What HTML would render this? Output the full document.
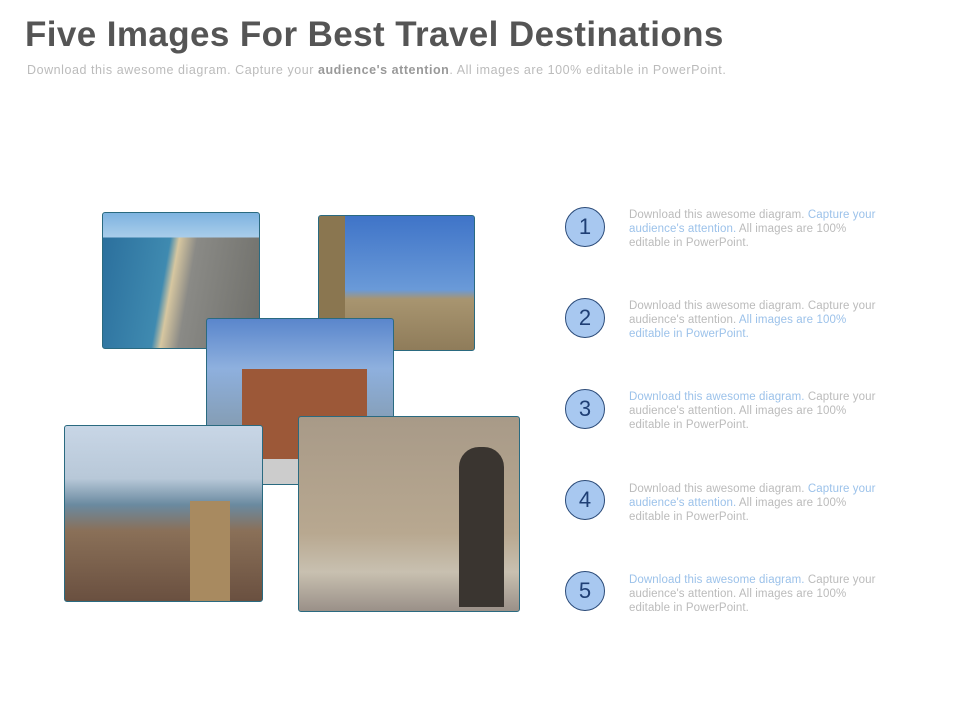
<!DOCTYPE html>
<html><head><style>
body{margin:0;width:960px;height:720px;background:#fff;position:relative;overflow:hidden;font-family:"Liberation Sans",sans-serif}
h1{position:absolute;left:25px;top:15px;margin:0;font-size:35px;font-weight:bold;color:#555;letter-spacing:0.4px}
.sub{position:absolute;left:27px;top:63px;font-size:12.5px;color:#bbb;letter-spacing:0.55px}
.img{position:absolute;border:1px solid #2a6a80;border-radius:3px;overflow:hidden}
.c{position:absolute;width:38px;height:38px;border-radius:50%;background:#a8c8f0;border:1.5px solid #2a4a78;color:#1f3f75;font-size:22px;text-align:center;line-height:38px;left:565px}
.t{position:absolute;left:629px;width:254px;font-size:11.5px;line-height:14px;color:#bbb;letter-spacing:0.1px}
.b{color:#9cc2ea}
</style></head><body>
<h1>Five Images For Best Travel Destinations</h1>
<div class="sub">Download this awesome diagram. Capture your <b style="color:#999">audience's attention</b>. All images are 100% editable in PowerPoint.</div>

<div class="img" style="left:102px;top:212px;width:156px;height:135px;background:linear-gradient(180deg,#7eb3e0 0,#a9cdea 18%,transparent 18%),linear-gradient(100deg,#2a6e9c 0,#3f8ab0 40%,#d7c7a0 45%,#8a8a86 55%,#6f6f6a 100%)"></div>
<div class="img" style="left:318px;top:215px;width:155px;height:134px;background:linear-gradient(180deg,#3f74c8 0,#6a9ad8 55%,#a89570 62%,#8f7c5a 100%)"><div style="position:absolute;left:0;top:0;width:26px;height:134px;background:#8a7650"></div></div>
<div class="img" style="left:206px;top:318px;width:186px;height:165px;background:linear-gradient(180deg,#5a86cc 0,#8eb0de 30%,#7b8a8a 100%)"><div style="position:absolute;left:35px;top:50px;width:125px;height:115px;background:#9c5838"></div><div style="position:absolute;left:35px;top:140px;width:125px;height:25px;background:#ccc"></div></div>
<div class="img" style="left:298px;top:416px;width:220px;height:194px;background:linear-gradient(180deg,#a89a88 0,#b8a890 60%,#c8c0b0 80%,#9a9088 100%)"><div style="position:absolute;left:160px;top:30px;width:45px;height:160px;background:#3a3530;border-radius:20px 20px 0 0"></div></div>
<div class="img" style="left:64px;top:425px;width:197px;height:175px;background:linear-gradient(180deg,#c8d6e6 0,#b8c8d8 30%,#6a8aa0 45%,#8a7058 60%,#6a5040 100%)"><div style="position:absolute;left:125px;top:75px;width:40px;height:100px;background:#a88a60"></div></div>

<div class="c" style="top:207px">1</div>
<div class="c" style="top:298px">2</div>
<div class="c" style="top:389px">3</div>
<div class="c" style="top:480px">4</div>
<div class="c" style="top:571px">5</div>

<div class="t" style="top:208px">Download this awesome diagram. <span class="b">Capture your audience's attention.</span> All images are 100% editable in PowerPoint.</div>
<div class="t" style="top:299px">Download this awesome diagram. Capture your audience's attention. <span class="b">All images are 100% editable in PowerPoint.</span></div>
<div class="t" style="top:390px"><span class="b">Download this awesome diagram.</span> Capture your audience's attention. All images are 100% editable in PowerPoint.</div>
<div class="t" style="top:482px">Download this awesome diagram. <span class="b">Capture your audience's attention.</span> All images are 100% editable in PowerPoint.</div>
<div class="t" style="top:573px"><span class="b">Download this awesome diagram.</span> Capture your audience's attention. All images are 100% editable in PowerPoint.</div>
</body></html>
